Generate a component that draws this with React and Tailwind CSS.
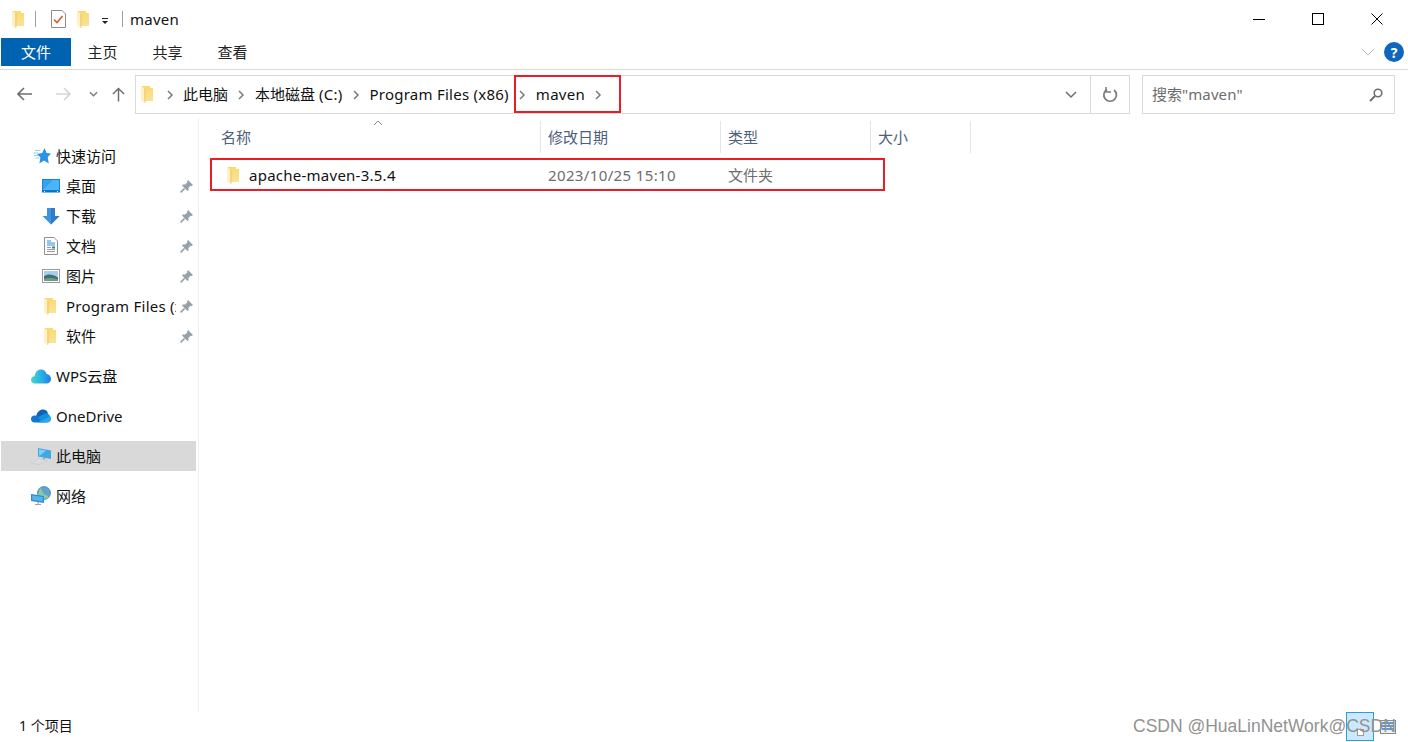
import React from "react";

const font = "font-['Noto_Sans','Noto_Sans_CJK_SC',sans-serif]";
const latin = "tracking-[0.25px]";

function Folder({ className = "" }) {
  return (
    <svg viewBox="0 0 12 17" className={`w-3 h-[17px] shrink-0 ${className}`}>
      <defs>
        <linearGradient id="folderBody" x1="0" y1="0" x2="0" y2="1">
          <stop offset="0" stopColor="#fbd96f" />
          <stop offset="1" stopColor="#f9e39a" />
        </linearGradient>
      </defs>
      <path d="M0 0 H9 V2 H12 V15 H3 V3 Z" fill="url(#folderBody)" />
      <path d="M0 0 L3.5 2.5 V17 L0 14.5 Z" fill="#fff1c2" />
      <path d="M3.5 2.5 V17 L4.4 16.4 V3 Z" fill="#e9c25a" />
    </svg>
  );
}

function Pin() {
  return (
    <svg viewBox="0 0 13 13" className="w-[13px] h-[13px] shrink-0">
      <path d="M8 0 L13 5 L11.6 6 L10.6 5.7 L8.4 7.9 L8.6 10.2 L7.5 11 L2 5.5 L2.8 4.4 L5.1 4.6 L7.3 2.4 L7 1.4 Z" fill="#97a1aa" />
      <path d="M4.6 8.4 L0.6 12.4" stroke="#97a1aa" strokeWidth="1.6" />
    </svg>
  );
}

function Chevron() {
  return (
    <svg viewBox="0 0 8 10" className="w-2 h-[10px] shrink-0">
      <path d="M2 1 L6 5 L2 9" fill="none" stroke="#7a7a7a" strokeWidth="1.5" />
    </svg>
  );
}

function StarIcon() {
  return (
    <svg viewBox="0 0 18 16" className="w-[18px] h-4">
      <path d="M11.5 0 L13.6 5 L18 5.6 L14.7 9.2 L15.8 15.5 L11 12.6 L6.4 15.5 L7.4 9.6 L4 6 L9.2 5 Z" fill="#2a93e8" />
      <path d="M2 2.5 H7.5 M0.5 5 H5 M1 7.5 H5.5 M2.5 10 H6" stroke="#8fd0f5" strokeWidth="1" />
    </svg>
  );
}

function DesktopIcon() {
  return (
    <svg viewBox="0 0 18 14" className="w-[18px] h-[14px]">
      <rect x="0" y="0" width="18" height="13" fill="#1486dc" />
      <rect x="1" y="1" width="16" height="10" fill="#2fa3f0" />
      <path d="M1 11 L11 1 H17 V11 Z" fill="#4db5f5" />
      <rect x="0" y="11.5" width="18" height="2" fill="#0c6fc0" />
      <path d="M2 12.5 H3 M15 12.5 H16" stroke="#fff" strokeWidth="1" />
    </svg>
  );
}

function DownloadIcon() {
  return (
    <svg viewBox="0 0 18 17" className="w-[18px] h-[17px]">
      <path d="M5 0 H13 V8 H17.5 L9 16.5 L0.5 8 H5 Z" fill="#3f92e0" />
      <path d="M9 0 H13 V8 H17.5 L9 16.5 Z" fill="#2f7ccb" />
    </svg>
  );
}

function DocIcon() {
  return (
    <svg viewBox="0 0 14 18" className="w-[14px] h-[18px]">
      <path d="M0.5 0.5 H10 L13.5 4 V17.5 H0.5 Z" fill="#fff" stroke="#8f8f8f" />
      <path d="M3 4 H7 M3 6 H11 M3 8 H11" stroke="#2f8fdc" strokeWidth="1" />
      <path d="M3 10.5 H7 M3 12.5 H11 M3 14.5 H11" stroke="#9a9a9a" strokeWidth="1" />
      <rect x="8" y="9.5" width="3" height="2" fill="#3f7f9f" />
    </svg>
  );
}

function PictureIcon() {
  return (
    <svg viewBox="0 0 18 14" className="w-[18px] h-[14px]">
      <rect x="0.5" y="0.5" width="17" height="13" fill="#fff" stroke="#9a9a9a" />
      <rect x="2" y="2" width="14" height="5" fill="#a9cfe8" />
      <path d="M2 7 C6 4.5 10 5 16 8 V12 H2 Z" fill="#3f6f7a" />
      <path d="M2 10 C7 8.5 11 9 16 10.5 V12 H2 Z" fill="#6f9f7f" />
    </svg>
  );
}

function WpsCloud() {
  return (
    <svg viewBox="0 0 20 15" className="w-5 h-[15px]">
      <defs>
        <linearGradient id="wps" x1="0" y1="0" x2="1" y2="0">
          <stop offset="0" stopColor="#3fdcc4" />
          <stop offset="0.6" stopColor="#29a8ea" />
          <stop offset="1" stopColor="#1c7fe0" />
        </linearGradient>
      </defs>
      <path d="M4 14.5 C1.5 14.5 0 12.8 0 10.8 C0 8.8 1.6 7.2 3.6 7.2 C4 3 7 0.5 10 0.5 C13 0.5 15 2.6 15.6 5 C18 5.2 20 7.3 20 10 C20 12.6 18 14.5 15.5 14.5 Z" fill="url(#wps)" />
    </svg>
  );
}

function OneDriveIcon() {
  return (
    <svg viewBox="0 0 20 14" className="w-5 h-[14px]">
      <path d="M5 8 C5.5 3 9 0.5 12 0.5 C14.5 0.5 16.5 2 17 4.5 L8 10 Z" fill="#0f62b8" />
      <path d="M3.5 13.5 C1.5 13.5 0 12 0 10 C0 8 1.5 6.5 3.5 6.5 C5 6.5 6 7 7 8 L12 13.5 Z" fill="#0f78d4" />
      <path d="M7 8 L13.5 4.8 C15 4 18 4.5 19 7 L20 10 L16 13.5 H11 Z" fill="#1490df" />
      <path d="M19 7.2 C19.8 8 20 9 20 10 C20 12 18.5 13.5 16.5 13.5 H7 Z" fill="#28a8ea" />
    </svg>
  );
}

function PcIcon() {
  return (
    <svg viewBox="0 0 20 18" className="w-5 h-[18px]">
      <path d="M7 1 L20 3.5 V12 L7 9.5 Z" fill="#3fa9e6" />
      <path d="M8 2.2 L15 3.6 L9 8.6 L8 8.4 Z" fill="#7fd0f5" />
      <path d="M12 10.5 L14 11 V13 L12 12.5 Z" fill="#9aa4ad" />
      <path d="M0 16 L8 11.5 L16 13.5 L8 17.5 Z" fill="#dcdcdc" stroke="#c8c8c8" strokeWidth="0.6" />
    </svg>
  );
}

function NetworkIcon() {
  return (
    <svg viewBox="0 0 20 20" className="w-5 h-5">
      <circle cx="13" cy="7" r="6.5" fill="#5ba4cf" />
      <path d="M9 2 C12 4 11 8 15 9 C17 9.5 18 11 17 12 C14 14 9 13 7 9 Z" fill="#8cc9a5" />
      <circle cx="13" cy="7" r="6.5" fill="none" stroke="#3f7fa8" strokeWidth="0.7" />
      <path d="M0 8 L13 10 V17 L0 15 Z" fill="#2f8bd2" />
      <path d="M1.2 9.4 L11.8 11 V15.4 L1.2 13.8 Z" fill="#56b4ea" />
      <path d="M4 18.5 H10 M7 16 V18.5" stroke="#9aa4ad" strokeWidth="1.2" />
    </svg>
  );
}

const quickLinks = [
  { label: "桌面", icon: <DesktopIcon /> },
  { label: "下载", icon: <DownloadIcon /> },
  { label: "文档", icon: <DocIcon />, nudge: "ml-[2px]" },
  { label: "图片", icon: <PictureIcon /> },
  { label: "Program Files (x86)", icon: <Folder />, nudge: "ml-[2px]", latin: true },
  { label: "软件", icon: <Folder />, nudge: "ml-[2px]" },
];

function SideHead({ icon, label, selected, className = "" }) {
  return (
    <div className={`flex items-center h-[30px] ${selected ? "bg-[#d9d9d9]" : ""} ${className}`}>
      <div className="w-[55px] pr-[5px] flex justify-end shrink-0">{icon}</div>
      <span className="text-[#111]">{label}</span>
    </div>
  );
}

function Sidebar() {
  return (
    <aside className="w-[197px] shrink-0 border-r border-[#f0f0f0] pt-[23px] pl-px box-content">
      <div className="w-[195px]">
        <SideHead icon={<StarIcon />} label="快速访问" />
        {quickLinks.map((item) => (
          <div key={item.label} className="flex items-center h-[30px] pl-[41px]">
            <div className="w-[24px] shrink-0 flex">
              <div className={item.nudge}>{item.icon}</div>
            </div>
            <span className={`w-[110px] overflow-hidden whitespace-nowrap text-[#111] ${item.latin ? latin : ""}`}>{item.label}</span>
            <div className="ml-[4px]"><Pin /></div>
          </div>
        ))}
        <SideHead icon={<WpsCloud />} label="WPS云盘" className="mt-[10px]" />
        <SideHead icon={<OneDriveIcon />} label="OneDrive" className="mt-[10px]" />
        <SideHead icon={<PcIcon />} label="此电脑" selected className="mt-[10px]" />
        <SideHead icon={<NetworkIcon />} label="网络" className="mt-[10px]" />
      </div>
    </aside>
  );
}

function TitleBar() {
  return (
    <div className="h-[38px] flex items-center pl-[12px] pr-[2px] shrink-0">
      <Folder />
      <div className="w-px h-4 bg-[#a0a0a0] ml-[11px] mr-[15px]" />
      <svg viewBox="0 0 15 18" className="w-[15px] h-[18px]">
        <path d="M0.5 0.5 H11 L14.5 4 V17.5 H0.5 Z" fill="#fff" stroke="#8c8c8c" />
        <path d="M3 9.5 L6 12.5 L11.5 6" fill="none" stroke="#e2572b" strokeWidth="1.6" />
      </svg>
      <Folder className="ml-[11px]" />
      <svg viewBox="0 0 8 8" className="w-2 h-2 ml-[12px] mt-1">
        <path d="M1 1.5 H7" stroke="#222" strokeWidth="1" />
        <path d="M1 4 H7 L4 7 Z" fill="#222" />
      </svg>
      <div className="w-px h-4 bg-[#a0a0a0] ml-[13px] mr-[7px]" />
      <span className={`text-[#111] ${latin}`}>maven</span>
      <div className="ml-auto flex items-center h-full">
        <div className="w-[59px] flex justify-center"><div className="w-3 h-px bg-black" /></div>
        <div className="w-[59px] flex justify-center"><div className="w-3 h-3 border border-black" /></div>
        <div className="w-[59px] flex justify-center">
          <svg viewBox="0 0 12 12" className="w-3 h-3"><path d="M0.5 0.5 L11.5 11.5 M11.5 0.5 L0.5 11.5" stroke="#000" strokeWidth="1" /></svg>
        </div>
      </div>
    </div>
  );
}

function RibbonTabs() {
  return (
    <div className="h-[32px] flex items-start pl-px pr-[4px] border-b border-[#dadada] shrink-0">
      <div className="w-[70px] h-[28px] mr-[-1px] bg-[#0063b1] text-white flex items-center justify-center">文件</div>
      {["主页", "共享", "查看"].map((t) => (
        <div key={t} className="w-[65px] h-[28px] pt-px flex items-center justify-center text-[#222]">{t}</div>
      ))}
      <div className="ml-auto h-[28px] flex items-center gap-[9px]">
        <svg viewBox="0 0 14 8" className="w-[14px] h-2"><path d="M1 1 L7 7 L13 1" fill="none" stroke="#b8b8b8" strokeWidth="1" /></svg>
        <div className="w-5 h-5 rounded-full bg-[#0f66bd] text-white text-[14px] font-bold flex items-center justify-center">?</div>
      </div>
    </div>
  );
}

function AddressRow() {
  return (
    <div className="h-[48px] flex items-start pt-[5px] shrink-0 pl-[17px] pr-[13px]">
      <div className="flex items-center h-[38px] w-[118px] shrink-0">
        <svg viewBox="0 0 16 14" className="w-4 h-[14px]"><path d="M1 7 H15 M7 1 L1 7 L7 13" fill="none" stroke="#6e6e6e" strokeWidth="1.6" /></svg>
        <svg viewBox="0 0 16 14" className="w-4 h-[14px] ml-[22px]"><path d="M1 7 H15 M9 1 L15 7 L9 13" fill="none" stroke="#d5d5d5" strokeWidth="1.6" /></svg>
        <svg viewBox="0 0 10 6" className="w-[9px] h-[6px] ml-[18px]"><path d="M1 1 L5 5 L9 1" fill="none" stroke="#7a7a7a" strokeWidth="1.5" /></svg>
        <svg viewBox="0 0 14 16" className="w-[13px] h-4 ml-[14px]"><path d="M7 16 V2 M1 8 L7 2 L13 8" fill="none" stroke="#6e6e6e" strokeWidth="1.6" /></svg>
      </div>
      <div className="relative w-[995px] h-[39px] border border-[#d9d9d9] flex items-center shrink-0">
        <Folder className="ml-[5px]" />
        <div className="ml-[13px]"><Chevron /></div>
        <span className="ml-[9px] text-[#111]">此电脑</span>
        <div className="ml-[9px]"><Chevron /></div>
        <span className="ml-[10px] text-[#111]">本地磁盘 <span className={latin}>(C:)</span></span>
        <div className="ml-[10px]"><Chevron /></div>
        <span className={`ml-[9px] text-[#111] ${latin}`}>Program Files (x86)</span>
        <div className="ml-[9px]"><Chevron /></div>
        <span className={`ml-[10px] text-[#111] ${latin}`}>maven</span>
        <div className="ml-[9px]"><Chevron /></div>
        <div className="ml-auto w-[39px] h-full flex items-center justify-center">
          <svg viewBox="0 0 12 8" className="w-3 h-2"><path d="M1 1 L6 6 L11 1" fill="none" stroke="#6e6e6e" strokeWidth="1.5" /></svg>
        </div>
        <div className="w-[39px] h-full border-l border-[#d9d9d9] flex items-center justify-center">
          <svg viewBox="0 0 16 16" className="w-4 h-4">
            <path d="M5 2.5 A6.3 6.3 0 1 0 12 3" fill="none" stroke="#7a7a7a" strokeWidth="1.7" />
            <path d="M4 0 V5 H9" fill="none" stroke="#7a7a7a" strokeWidth="1.5" />
          </svg>
        </div>
        <div className="absolute left-[378px] -top-px w-[107px] h-[38px] border-2 border-[#ed1c24]" />
      </div>
      <div className="ml-[12px] flex-1 h-[39px] border border-[#d9d9d9] flex items-center pl-[9px] pr-[11px] text-[#6d6d6d]">
        <span>搜索<span className="tracking-[0.1px]">"maven"</span></span>
        <svg viewBox="0 0 14 14" className="w-[14px] h-[14px] ml-auto">
          <circle cx="9" cy="5" r="3.8" fill="none" stroke="#6e6e6e" strokeWidth="1.6" />
          <path d="M6 8 L1 13" stroke="#6e6e6e" strokeWidth="2" />
        </svg>
      </div>
    </div>
  );
}

const columns = [
  { label: "名称", w: "w-[331px] pl-[11px]" },
  { label: "修改日期", w: "w-[180px] pl-[7px]" },
  { label: "类型", w: "w-[150px] pl-[7px]" },
  { label: "大小", w: "w-[100px] pl-[7px]" },
];

function FileList() {
  return (
    <main className="flex-1 pt-[3px] pl-[11px]">
      <div className="relative flex h-[32px] text-[#4c607a]">
        {columns.map((c) => (
          <div key={c.label} className={`${c.w} border-r border-[#e5e5e5] flex items-center`}>{c.label}</div>
        ))}
        <svg viewBox="0 0 10 6" className="absolute left-[163px] -top-px w-[10px] h-[6px]">
          <path d="M1 5 L5 1 L9 5" fill="none" stroke="#8a8a8a" strokeWidth="1" />
        </svg>
      </div>
      <div className="relative flex items-center h-[30px] mt-[6px] pt-[2px]">
        <div className="w-[331px] pl-[17px] flex items-center">
          <Folder />
          <span className={`ml-[10px] text-[#111] ${latin}`}>apache-maven-3.5.4</span>
        </div>
        <div className="w-[180px] pl-[7px] text-[#6d6d6d] tracking-[0.37px]">2023/10/25 15:10</div>
        <div className="w-[150px] pl-[7px] text-[#6d6d6d]">文件夹</div>
        <div className="absolute left-0 -top-[1px] w-[675px] h-[33px] border-2 border-[#ed1c24]" />
      </div>
    </main>
  );
}

function StatusBar() {
  return (
    <div className="relative h-[30px] shrink-0 flex items-start pl-[19px] text-[14px] text-[#111]">
      <span className="mt-[3px]">1 个项目</span>
      <div className="ml-auto mr-[12px] flex items-start">
        <div className="w-[28px] h-[29px] bg-[#cce8ff] border border-[#26a0da] flex items-center justify-center">
          <div className="w-[7px] h-[7px] mt-[12px] border border-[#9a9a9a] bg-white" />
        </div>
        <svg viewBox="0 0 16 14" className="w-4 h-[14px] ml-[6px] mt-[8px]">
          <rect x="0.5" y="0.5" width="15" height="13" fill="#eef2f5" stroke="#8a8a8a" />
          <path d="M2 3 H14 M2 6 H14 M2 9 H14" stroke="#2f7ccb" strokeWidth="1.4" />
        </svg>
      </div>
      <span className="absolute left-[1133px] top-px text-[17.5px] text-[#929292] font-['Liberation_Sans',sans-serif] whitespace-nowrap">
        CSDN @HuaLinNetWork@CSDN
      </span>
    </div>
  );
}

export default function App() {
  return (
    <div className={`w-[1408px] h-[742px] bg-white overflow-hidden flex flex-col text-[15px] ${font}`}>
      <TitleBar />
      <RibbonTabs />
      <AddressRow />
      <div className="flex-1 flex min-h-0">
        <Sidebar />
        <FileList />
      </div>
      <StatusBar />
    </div>
  );
}
